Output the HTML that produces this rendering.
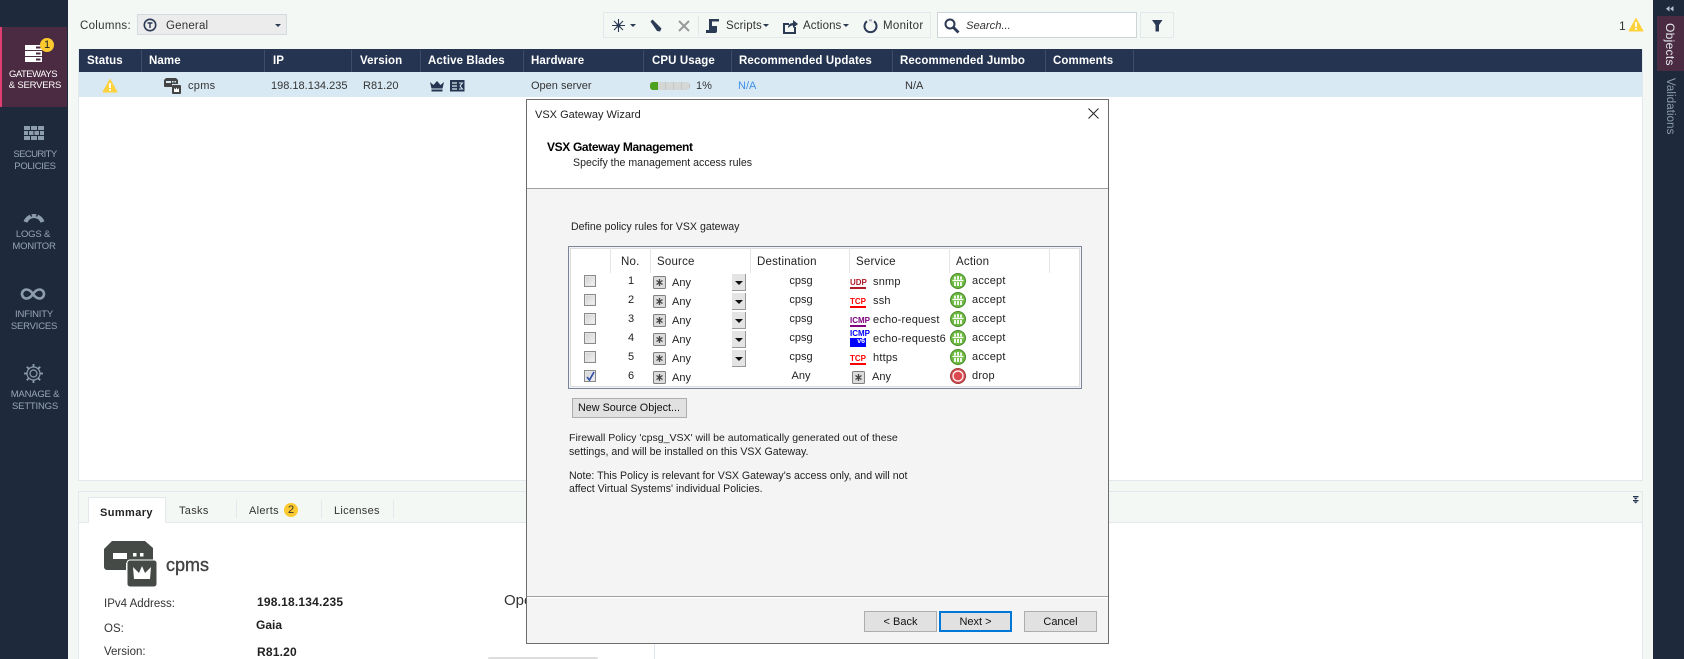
<!DOCTYPE html>
<html><head><meta charset="utf-8"><style>
html,body{margin:0;padding:0;width:1684px;height:659px;overflow:hidden}
body{position:relative;background:#f4f8f5;font-family:"Liberation Sans",sans-serif;font-size:11px;color:#333}
.a{position:absolute}
.t{position:absolute;white-space:nowrap;line-height:14px}
.c{transform:translateX(-50%)}
.h{position:absolute;top:50px;height:23px;line-height:23px;color:#fff;font-weight:bold;font-size:11.5px;letter-spacing:.1px;white-space:nowrap}
.s{position:absolute;top:50px;height:22px;width:1px;background:#3d4e6a}
.n{position:absolute;white-space:nowrap;line-height:12px;font-size:9.5px;letter-spacing:-.2px;color:#97a5b8;transform:translateX(-50%)}
.d{color:#222}
.p{font-size:10.6px}
.ch{position:absolute;left:584px;width:10px;height:10px;border:1px solid #8a8a8a;background:linear-gradient(135deg,#d0d0d0,#f4f4f4);box-shadow:inset 0 0 0 1px #e6e6e6}
.dd{position:absolute;left:732px;width:14px;height:17px;background:#e4e4e4;border-right:1px solid #999;border-bottom:1px solid #999;box-sizing:border-box}
.dd:after{content:"";position:absolute;left:3px;top:7px;border:4px solid transparent;border-top:4px solid #111;border-bottom:0}
.sv{position:absolute;left:850px;width:16px;text-align:center;font-weight:bold;font-size:8px;line-height:8px;border-bottom:2px solid;height:8px}
.col{position:absolute;top:248px;height:25px;width:1px;background:#e4e4e4}
.b{position:absolute;top:611px;height:21px;box-sizing:border-box;background:#e1e1e1;border:1px solid #adadad;text-align:center;line-height:21px;color:#111;font-size:11px}
.car{position:absolute;border:3px solid transparent;border-top:3px solid #2b3a55;border-bottom:0}
svg{position:absolute;overflow:visible}
</style></head><body>
<svg width="0" height="0" style="position:absolute"><defs>
<g id="warn"><path d="M7 0.5 L14 13 L0 13 Z" fill="#fdd23c" stroke="#fdd23c" stroke-linejoin="round"/><rect x="6.1" y="4" width="1.8" height="5" fill="#fff"/><rect x="6.1" y="10" width="1.8" height="1.8" fill="#fff"/></g>
<g id="any"><rect x=".5" y=".5" width="12" height="12" rx="1" fill="#dcdcdc" stroke="#808080"/><path d="M6.5 3v7M3.5 4.5l6 4M9.5 4.5l-6 4" stroke="#444" stroke-width="1.3"/></g>
<g id="acc"><circle cx="8" cy="8" r="7.5" fill="#6cba3f" stroke="#4a8a2d"/><path d="M2.5 7.5h11" stroke="#fff" stroke-width="1.4"/><path d="M5 3.500v3M11 3.500v3M5 9v4M11 9v4M8 3v3.500M8 9v4" stroke="#fff" stroke-width="1.8"/></g>
</defs></svg>

<!-- left nav -->
<div class="a" style="left:0;top:0;width:68px;height:659px;background:#1e2a3c"></div>
<div class="a" style="left:0;top:27px;width:67px;height:80px;background:#4a2b41"></div>
<div class="a" style="left:0;top:27px;width:2px;height:80px;background:#df3f70"></div>
<svg style="left:25px;top:45px" width="18" height="18"><rect x="0" y="0" width="17" height="5" fill="#fff"/><rect x="0" y="6" width="17" height="5" fill="#fff"/><rect x="0" y="12" width="17" height="5" fill="#fff"/><rect x="11" y="1.5" width="4.5" height="2" fill="#4a2b41"/><rect x="11" y="7.5" width="4.5" height="2" fill="#4a2b41"/><rect x="11" y="13.5" width="4.5" height="2" fill="#4a2b41"/></svg>
<div class="a" style="left:40px;top:38px;width:14px;height:14px;border-radius:50%;background:#fcc92f;color:#222;font-size:11px;line-height:14px;text-align:center">1</div>
<div class="n" style="left:33px;top:69px;color:#fff;letter-spacing:-.5px">GATEWAYS</div>
<div class="n" style="left:35px;top:80px;color:#fff">&amp; SERVERS</div>
<svg style="left:24px;top:126px" width="20" height="15" fill="#8e9cb0"><rect x="0" y="0" width="6" height="4"/><rect x="7" y="0" width="6" height="4"/><rect x="14" y="0" width="6" height="4"/><rect x="0" y="5" width="4" height="4"/><rect x="5" y="5" width="4.5" height="4"/><rect x="10.5" y="5" width="4.5" height="4"/><rect x="16" y="5" width="4" height="4"/><rect x="0" y="10" width="6" height="4"/><rect x="7" y="10" width="6" height="4"/><rect x="14" y="10" width="6" height="4"/></svg>
<div class="n" style="left:35px;top:149px;letter-spacing:-.6px">SECURITY</div>
<div class="n" style="left:35px;top:161px;letter-spacing:-.3px">POLICIES</div>
<svg style="left:23px;top:210px" width="22" height="13"><path d="M2.5 12 A9 9 0 0 1 19.5 12" fill="none" stroke="#8e9cb0" stroke-width="4"/><path d="M7.5 4.5l1.2 2M14.5 4.500l-1.2 2" stroke="#1e2a3c" stroke-width="1.5"/></svg>
<div class="n" style="left:33px;top:229px">LOGS &amp;</div>
<div class="n" style="left:34px;top:241px">MONITOR</div>
<svg style="left:21px;top:288px" width="24" height="12"><path d="M12 6 C9 1.5 6.5 1.5 5.5 1.5 A4.5 4.5 0 0 0 5.5 10.5 C6.5 10.5 9 10.5 12 6 C15 1.5 17.5 1.5 18.5 1.5 A4.5 4.5 0 0 1 18.5 10.5 C17.5 10.5 15 10.5 12 6Z" fill="none" stroke="#8e9cb0" stroke-width="2.6"/></svg>
<div class="n" style="left:34px;top:309px">INFINITY</div>
<div class="n" style="left:34px;top:321px">SERVICES</div>
<svg style="left:24px;top:364px" width="19" height="19"><circle cx="9.5" cy="9.5" r="6.5" fill="none" stroke="#8e9cb0" stroke-width="1.2"/><circle cx="9.5" cy="9.5" r="3.5" fill="none" stroke="#8e9cb0" stroke-width="1.2"/><path d="M9.5 0v3M9.5 16v3M0 9.5h3M16 9.5h3M2.8 2.8l2 2M14.2 14.2l2 2M2.8 16.2l2-2M14.2 4.8l2-2" stroke="#8e9cb0" stroke-width="1.8"/></svg>
<div class="n" style="left:35px;top:389px">MANAGE &amp;</div>
<div class="n" style="left:35px;top:401px">SETTINGS</div>

<!-- top toolbar -->
<div class="t" style="left:80px;top:19px;font-size:11.5px;letter-spacing:.3px">Columns:</div>
<div class="a" style="left:137px;top:14px;width:150px;height:21px;box-sizing:border-box;background:#ececec;border:1px solid #d5dbe0"></div>
<svg style="left:143px;top:18px" width="14" height="14"><circle cx="7" cy="7" r="5.7" fill="none" stroke="#2b3a55" stroke-width="1.6"/><path d="M4.5 5h5M7 5v5" stroke="#2b3a55" stroke-width="1.4"/></svg>
<div class="t" style="left:166px;top:19px;font-size:11.5px;letter-spacing:.2px">General</div>
<div class="car" style="left:275px;top:24px"></div>

<div class="a" style="left:603px;top:12px;width:328px;height:26px;box-sizing:border-box;border:1px solid #e2e8ec"></div>
<svg style="left:612px;top:19px" width="13" height="13"><path d="M6.5 0v13M0 6.5h13M2 2l9 9M11 2l-9 9" stroke="#2b3a55" stroke-width="1.1"/><circle cx="6.5" cy="6.5" r="2" fill="#2b3a55"/></svg>
<div class="car" style="left:630px;top:24px"></div>
<svg style="left:649px;top:19px" width="13" height="13"><path d="M1.5 2.5l2-2 9 9-1.5 3-3-.5z" fill="#2b3a55"/></svg>
<svg style="left:678px;top:20px" width="12" height="12"><path d="M1 1l10 10M11 1L1 11" stroke="#999" stroke-width="2"/></svg>
<div class="a" style="left:698px;top:16px;width:1px;height:19px;background:#dfe5e8"></div>
<svg style="left:706px;top:19px" width="14" height="14"><path d="M3 0h10v2.500H6V7h5v5a2 2 0 0 1-2 2H0v-3h3z" fill="#2b3a55"/></svg>
<div class="t" style="left:726px;top:19px;font-size:11.5px;letter-spacing:.1px">Scripts</div>
<div class="car" style="left:763px;top:24px"></div>
<svg style="left:783px;top:19px" width="15" height="15"><path d="M1 5h5M1 4v10h11V8" fill="none" stroke="#2b3a55" stroke-width="2"/><path d="M5 9c0-3 2-5 5-5V1l5 4-5 4V6.500c-2 0-3.500 1-5 2.500z" fill="#2b3a55"/></svg>
<div class="t" style="left:803px;top:19px;font-size:11.5px;letter-spacing:.1px">Actions</div>
<div class="car" style="left:843px;top:24px"></div>
<svg style="left:863px;top:19px" width="15" height="15"><path d="M4 2.300A6 6 0 1 0 11 2.300" fill="none" stroke="#2b3a55" stroke-width="2"/><path d="M6 1.500A6 6 0 0 1 9 1.500" stroke="#aab" fill="none" stroke-width="2"/></svg>
<div class="t" style="left:883px;top:19px;font-size:11.5px;letter-spacing:.3px">Monitor</div>
<div class="a" style="left:937px;top:12px;width:200px;height:26px;box-sizing:border-box;background:#fff;border:1px solid #ced5da"></div>
<svg style="left:944px;top:18px" width="16" height="16"><circle cx="6" cy="6" r="4.500" fill="none" stroke="#2b3a55" stroke-width="2"/><path d="M9.500 9.500l5 5" stroke="#2b3a55" stroke-width="2.800"/></svg>
<div class="t" style="left:966px;top:19px;font-style:italic;font-size:11.2px">Search...</div>
<div class="a" style="left:1140px;top:12px;width:34px;height:26px;box-sizing:border-box;border:1px solid #e2e8ec"></div>
<svg style="left:1152px;top:20px" width="11" height="12"><path d="M0 0h10.500L7 5V11.500H3.500V5z" fill="#2b3a55"/></svg>
<div class="t" style="left:1619px;top:19px;font-size:12px">1</div>
<svg style="left:1629px;top:18px" width="14" height="14"><use href="#warn"/></svg>

<!-- table -->
<div class="a" style="left:78px;top:49px;width:1565px;height:432px;box-sizing:border-box;background:#fff;border:1px solid #e2e8ec;border-top:0"></div>
<div class="a" style="left:79px;top:49px;width:1563px;height:23px;background:#253551"></div>
<div class="a" style="left:79px;top:72px;width:1563px;height:25px;background:#d8e9f4"></div>
<div class="s" style="left:141px"></div><div class="s" style="left:264px"></div><div class="s" style="left:351px"></div><div class="s" style="left:420px"></div><div class="s" style="left:523px"></div><div class="s" style="left:643px"></div><div class="s" style="left:731px"></div><div class="s" style="left:892px"></div><div class="s" style="left:1045px"></div><div class="s" style="left:1133px"></div>
<div class="h" style="left:87px">Status</div>
<div class="h" style="left:149px">Name</div>
<div class="h" style="left:273px">IP</div>
<div class="h" style="left:360px">Version</div>
<div class="h" style="left:428px">Active Blades</div>
<div class="h" style="left:531px">Hardware</div>
<div class="h" style="left:652px">CPU Usage</div>
<div class="h" style="left:739px">Recommended Updates</div>
<div class="h" style="left:900px">Recommended Jumbo</div>
<div class="h" style="left:1053px">Comments</div>

<svg style="left:103px;top:79px" width="14" height="14"><use href="#warn"/></svg>
<svg style="left:164px;top:78px" width="17" height="16"><path d="M2 0h10l2 2v4H8v3H1a1 1 0 0 1-1-1V2z" fill="#444"/><rect x="2" y="3" width="5" height="2" fill="#d8e9f4"/><rect x="8" y="3" width="1.500" height="1.500" fill="#d8e9f4"/><rect x="10.500" y="3" width="1.500" height="1.500" fill="#d8e9f4"/><rect x="8" y="7" width="9" height="9" rx="1" fill="#444"/><path d="M10 10l1.500 1.500 1-2 1 2L15 10v4h-5z" fill="#fff"/></svg>
<div class="t" style="left:188px;top:79px;letter-spacing:.3px">cpms</div>
<div class="t" style="left:271px;top:79px">198.18.134.235</div>
<div class="t" style="left:363px;top:79px">R81.20</div>
<svg style="left:430px;top:81px" width="14" height="11"><path d="M0 1l3.500 3L7 0l3.500 4L14 1l-1.500 6.500h-11z" fill="#253551"/><rect x="1.500" y="8.500" width="11" height="2" fill="#253551"/></svg>
<svg style="left:450px;top:80px" width="15" height="12"><rect width="14.500" height="11.500" fill="#253551"/><path d="M2 3h5M2 6h5M2 9h5" stroke="#d8e9f4" stroke-width="1.200"/><path d="M9 3h3.500L10 6l2.500 3H9" fill="none" stroke="#d8e9f4"/></svg>
<div class="t" style="left:531px;top:79px">Open server</div>
<div class="a" style="left:650px;top:82px;width:40px;height:8px;border-radius:3px;background:repeating-linear-gradient(90deg,#d5d7d7 0 7px,#c4c7c8 7px 8px)"></div>
<div class="a" style="left:650px;top:82px;width:8px;height:8px;border-radius:3px 0 0 3px;background:#4da11f"></div>
<div class="t" style="left:696px;top:79px">1%</div>
<div class="t" style="left:738px;top:79px;color:#3d8fe6">N/A</div>
<div class="t" style="left:905px;top:79px">N/A</div>

<!-- right bar -->
<div class="a" style="left:1653px;top:0;width:31px;height:659px;background:#1e2a3c"></div>
<div class="a" style="left:1657px;top:16px;width:27px;height:55px;background:#4a2b41"></div>
<svg style="left:1666px;top:6px" width="8" height="6"><path d="M3.500 0v5.500L0 2.750zM7.500 0v5.500L4 2.750z" fill="#b7c1cf"/></svg>
<div class="t" style="left:1662px;top:23px;writing-mode:vertical-rl;color:#e6e9ee;font-size:12px;line-height:15px;letter-spacing:.3px">Objects</div>
<div class="t" style="left:1662px;top:78px;writing-mode:vertical-rl;color:#8e9cb0;font-size:11.5px;line-height:15px;letter-spacing:.1px">Validations</div>

<!-- lower panel -->
<div class="a" style="left:78px;top:491px;width:1565px;height:168px;box-sizing:border-box;border:1px solid #e2e8ec;border-bottom:0;background:#fff"></div>
<div class="a" style="left:79px;top:492px;width:1563px;height:30px;background:#f4f8f5;border-bottom:1px solid #e2e8ec"></div>
<div class="a" style="left:88px;top:497px;width:78px;height:26px;box-sizing:border-box;background:#fff;border:1px solid #e2e8ec;border-bottom:0"></div>
<div class="t" style="left:100px;top:506px;font-weight:bold;font-size:11px;letter-spacing:.4px;color:#222">Summary</div>
<div class="t" style="left:179px;top:504px;letter-spacing:.3px">Tasks</div>
<div class="a" style="left:236px;top:500px;width:1px;height:18px;background:#e2e8ec"></div>
<div class="t" style="left:249px;top:504px;letter-spacing:.3px">Alerts</div>
<div class="a" style="left:284px;top:503px;width:14px;height:14px;border-radius:50%;background:#fcc92f;text-align:center;line-height:14px">2</div>
<div class="a" style="left:321px;top:500px;width:1px;height:18px;background:#e2e8ec"></div>
<div class="t" style="left:334px;top:504px;letter-spacing:.3px">Licenses</div>
<div class="a" style="left:393px;top:500px;width:1px;height:18px;background:#e2e8ec"></div>
<svg style="left:1633px;top:496px" width="6" height="8"><path d="M0 0h5.500v1.300H0zM.700 1.800h4L2.700 3.800zM0 4h5.500v1.300H0zM.700 5.600h4L2.700 7.500z" fill="#253551"/></svg>
<svg style="left:104px;top:541px" width="53" height="46"><path d="M8 0h33l8 7v15H22v7H3a3 3 0 0 1-3-3V8z" fill="#454a47"/><rect x="9" y="12" width="14" height="6" fill="#fff"/><rect x="29" y="12" width="3.500" height="3.500" fill="#fff"/><rect x="36" y="12" width="3.500" height="3.500" fill="#fff"/><rect x="23" y="19" width="30" height="27" rx="3" fill="#454a47" stroke="#fff" stroke-width="1"/><path d="M29 26l6 6 3-7 3 7 6-6-1 12H30z" fill="#fff"/></svg>
<div class="t" style="left:166px;top:555px;font-size:18px;line-height:20px;color:#444;-webkit-text-stroke:.4px #444">cpms</div>
<div class="t" style="left:104px;top:597px;font-size:11.5px">IPv4 Address:</div>
<div class="t" style="left:257px;top:595px;font-weight:bold;font-size:12px;letter-spacing:.2px;color:#222">198.18.134.235</div>
<div class="t" style="left:104px;top:622px;font-size:11.5px">OS:</div>
<div class="t" style="left:256px;top:618px;font-weight:bold;font-size:12px;color:#222">Gaia</div>
<div class="t" style="left:104px;top:645px;font-size:11.5px">Version:</div>
<div class="t" style="left:257px;top:645px;font-weight:bold;font-size:12px;letter-spacing:.2px;color:#222">R81.20</div>
<div class="t" style="left:504px;top:594px;font-size:15px">Open server</div>
<div class="a" style="left:654px;top:640px;width:1px;height:19px;background:#dde6ee"></div>
<div class="a" style="left:488px;top:657px;width:110px;height:2px;border-radius:3px 3px 0 0;background:#ddd"></div>

<!-- dialog -->
<div class="a" style="left:526px;top:99px;width:583px;height:545px;box-sizing:border-box;background:#f4f4f4;border:1px solid #6d6d6d"></div>
<div class="a" style="left:527px;top:100px;width:581px;height:88px;background:#fff;border-bottom:1px solid #a0a0a0"></div>
<div class="t d" style="left:535px;top:108px">VSX Gateway Wizard</div>
<svg style="left:1088px;top:108px" width="11" height="11"><path d="M.500.500l10 10M10.500.500l-10 10" stroke="#222" stroke-width="1"/></svg>
<div class="t d" style="left:547px;top:140px;font-weight:bold;font-size:12px;letter-spacing:-.35px;color:#000">VSX Gateway Management</div>
<div class="t d p" style="left:573px;top:156px">Specify the management access rules</div>
<div class="t d p" style="left:571px;top:220px">Define policy rules for VSX gateway</div>

<div class="a" style="left:568px;top:246px;width:514px;height:143px;box-sizing:border-box;background:#f4f4f4;border:1px solid #7a8599"></div>
<div class="a" style="left:570px;top:248px;width:510px;height:139px;box-sizing:border-box;background:#fff;border:1px solid #ddd"></div>
<div class="col" style="left:610px"></div><div class="col" style="left:650px"></div><div class="col" style="left:750px"></div><div class="col" style="left:849px"></div><div class="col" style="left:949px"></div><div class="col" style="left:1049px"></div>
<div class="t d" style="left:621px;top:255px;letter-spacing:.2px;font-size:11.5px">No.</div>
<div class="t d" style="left:657px;top:255px;letter-spacing:.2px;font-size:11.5px">Source</div>
<div class="t d" style="left:757px;top:255px;letter-spacing:.2px;font-size:11.5px">Destination</div>
<div class="t d" style="left:856px;top:255px;letter-spacing:.2px;font-size:11.5px">Service</div>
<div class="t d" style="left:956px;top:255px;letter-spacing:.2px;font-size:11.5px">Action</div>

<!-- rows -->
<div class="ch" style="top:275px"></div><div class="ch" style="top:294px"></div><div class="ch" style="top:313px"></div><div class="ch" style="top:332px"></div><div class="ch" style="top:351px"></div><div class="ch" style="top:370px"></div>
<svg style="left:586px;top:372px" width="9" height="9"><path d="M1 5l2.500 3L8 0" fill="none" stroke="#2f4fa8" stroke-width="1.700"/></svg>

<div class="t d c" style="left:631px;top:274px">1</div><div class="t d c" style="left:631px;top:293px">2</div><div class="t d c" style="left:631px;top:312px">3</div><div class="t d c" style="left:631px;top:331px">4</div><div class="t d c" style="left:631px;top:350px">5</div><div class="t d c" style="left:631px;top:369px">6</div>

<svg style="left:653px;top:276px" width="13" height="13"><use href="#any"/></svg><svg style="left:653px;top:295px" width="13" height="13"><use href="#any"/></svg><svg style="left:653px;top:314px" width="13" height="13"><use href="#any"/></svg><svg style="left:653px;top:333px" width="13" height="13"><use href="#any"/></svg><svg style="left:653px;top:352px" width="13" height="13"><use href="#any"/></svg><svg style="left:653px;top:371px" width="13" height="13"><use href="#any"/></svg>
<div class="t d" style="left:672px;top:276px">Any</div><div class="t d" style="left:672px;top:295px">Any</div><div class="t d" style="left:672px;top:314px">Any</div><div class="t d" style="left:672px;top:333px">Any</div><div class="t d" style="left:672px;top:352px">Any</div><div class="t d" style="left:672px;top:371px">Any</div>

<div class="dd" style="top:274px"></div><div class="dd" style="top:293px"></div><div class="dd" style="top:312px"></div><div class="dd" style="top:331px"></div><div class="dd" style="top:350px"></div>

<div class="t d c" style="left:801px;top:274px">cpsg</div><div class="t d c" style="left:801px;top:293px">cpsg</div><div class="t d c" style="left:801px;top:312px">cpsg</div><div class="t d c" style="left:801px;top:331px">cpsg</div><div class="t d c" style="left:801px;top:350px">cpsg</div><div class="t d c" style="left:801px;top:369px">Any</div>

<div class="sv" style="top:279px;color:#b01c28;border-color:#b01c28">UDP</div>
<div class="sv" style="top:298px;color:#f00;border-color:#f00">TCP</div>
<div class="sv" style="top:317px;color:#800080;border-color:#800080">ICMP</div>
<div class="sv" style="top:330px;color:#00f;border-color:#00f;height:15px;line-height:8px">ICMP<div style="background:#00f;color:#fff;text-align:right;font-size:7px;line-height:7px;padding-right:1px">v6</div></div>
<div class="sv" style="top:355px;color:#f00;border-color:#f00">TCP</div>
<svg style="left:852px;top:371px" width="13" height="13"><use href="#any"/></svg>
<div class="t d" style="left:873px;top:275px;letter-spacing:.2px">snmp</div><div class="t d" style="left:873px;top:294px;letter-spacing:.2px">ssh</div><div class="t d" style="left:873px;top:313px;letter-spacing:.2px">echo-request</div><div class="t d" style="left:873px;top:332px;letter-spacing:.2px">echo-request6</div><div class="t d" style="left:873px;top:351px;letter-spacing:.2px">https</div><div class="t d" style="left:872px;top:370px">Any</div>

<svg style="left:950px;top:273px" width="16" height="16"><use href="#acc"/></svg><svg style="left:950px;top:292px" width="16" height="16"><use href="#acc"/></svg><svg style="left:950px;top:311px" width="16" height="16"><use href="#acc"/></svg><svg style="left:950px;top:330px" width="16" height="16"><use href="#acc"/></svg><svg style="left:950px;top:349px" width="16" height="16"><use href="#acc"/></svg>
<svg style="left:950px;top:368px" width="16" height="16"><circle cx="8" cy="8" r="7.500" fill="#d9484d" stroke="#9d3a3d"/><circle cx="8" cy="8" r="5" fill="#dc4a50" stroke="#fff" stroke-width="1.200"/></svg>
<div class="t d" style="left:972px;top:274px;letter-spacing:.2px">accept</div><div class="t d" style="left:972px;top:293px;letter-spacing:.2px">accept</div><div class="t d" style="left:972px;top:312px;letter-spacing:.2px">accept</div><div class="t d" style="left:972px;top:331px;letter-spacing:.2px">accept</div><div class="t d" style="left:972px;top:350px;letter-spacing:.2px">accept</div><div class="t d" style="left:972px;top:369px;letter-spacing:.2px">drop</div>

<div class="a" style="left:572px;top:398px;width:115px;height:20px;box-sizing:border-box;background:#e1e1e1;border:1px solid #adadad;line-height:19px;padding-left:5px;color:#111;white-space:nowrap;font-size:10.8px">New Source Object...</div>
<div class="t d p" style="left:569px;top:431px;font-size:10.55px">Firewall Policy 'cpsg_VSX' will be automatically generated out of these</div>
<div class="t d p" style="left:569px;top:445px">settings, and will be installed on this VSX Gateway.</div>
<div class="t d p" style="left:569px;top:469px">Note: This Policy is relevant for VSX Gateway's access only, and will not</div>
<div class="t d p" style="left:569px;top:482px">affect Virtual Systems' individual Policies.</div>

<div class="a" style="left:527px;top:596px;width:581px;height:1px;background:#a0a0a0"></div>
<div class="a" style="left:527px;top:597px;width:581px;height:1px;background:#fff"></div>
<div class="b" style="left:864px;width:73px">&lt; Back</div>
<div class="b" style="left:939px;width:73px;border:2px solid #0078d7;line-height:19px">Next &gt;</div>
<div class="b" style="left:1024px;width:73px">Cancel</div>
</body></html>
